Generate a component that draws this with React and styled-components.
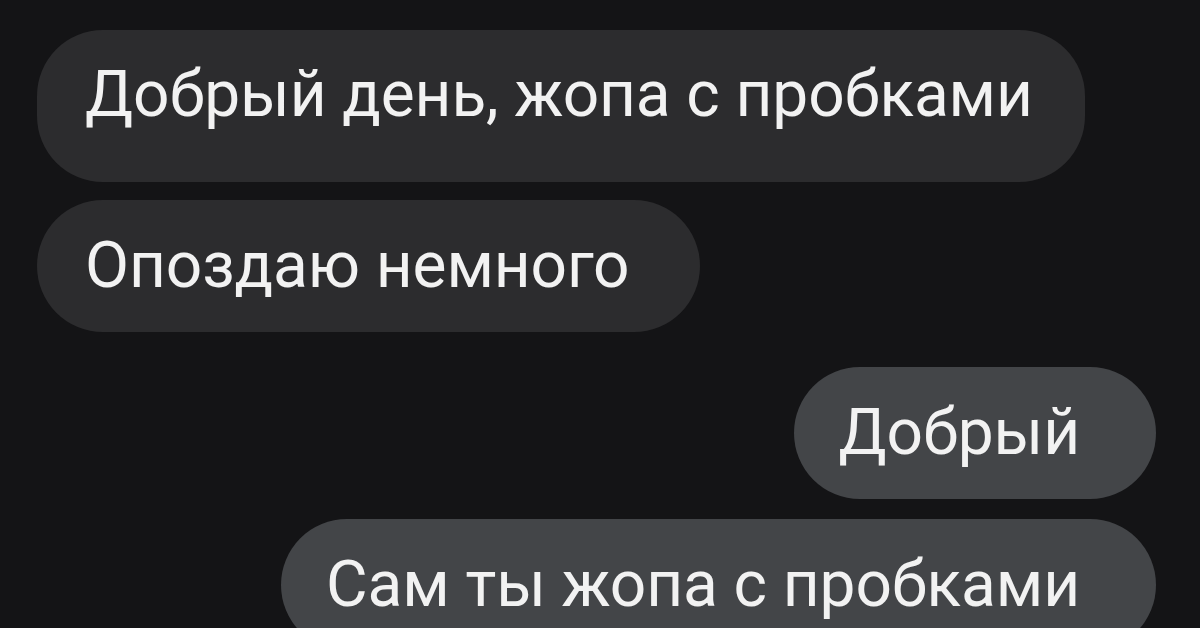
import React from "react";
import styled, { createGlobalStyle } from "styled-components";

const Global = createGlobalStyle`
  html, body { margin: 0; padding: 0; background: #141416; }
  body { width: 1200px; height: 628px; overflow: hidden; }
`;

const Chat = styled.div`
  display: flex;
  flex-direction: column;
  padding: 30px 44px 0 37px;
  height: 628px;
  box-sizing: border-box;
  background: #141416;
  font-family: Roboto, "Liberation Sans", sans-serif;
`;

const Row = styled.div`
  display: flex;
  justify-content: ${(p) => (p.$out ? "flex-end" : "flex-start")};
  margin-top: ${(p) => p.$gap || 0}px;
`;

const Bubble = styled.div`
  background: ${(p) => (p.$out ? "#434548" : "#2c2c2e")};
  color: #f2f2f2;
  border-radius: 66px;
  height: ${(p) => p.$h || 132}px;
  box-sizing: border-box;
  padding: 0 ${(p) => p.$pr || 52}px ${(p) => p.$pb || 0}px ${(p) => (p.$out ? 45 : 48)}px;
  display: flex;
  align-items: center;
  font-size: 64px;
  line-height: 1;
  white-space: nowrap;
  letter-spacing: -0.1px;
`;

export default function App() {
  return (
    <>
      <Global />
      <Chat>
        <Row>
          <Bubble $h={152} $pb={22}>Добрый день, жопа с пробками</Bubble>
        </Row>
        <Row $gap={18}>
          <Bubble $pr={70}>Опоздаю немного</Bubble>
        </Row>
        <Row $out $gap={35}>
          <Bubble $out $pr={76}>Добрый</Bubble>
        </Row>
        <Row $out $gap={20}>
          <Bubble $out $pr={76}>Сам ты жопа с пробками</Bubble>
        </Row>
      </Chat>
    </>
  );
}
